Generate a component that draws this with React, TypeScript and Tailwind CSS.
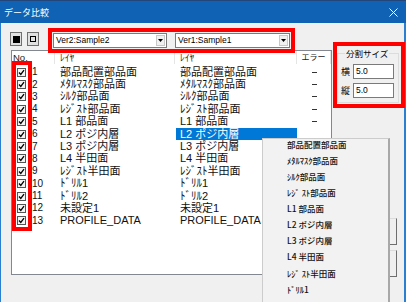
import React from "react";

const rows = [
  "部品配置部品面",
  "ﾒﾀﾙﾏｽｸ部品面",
  "ｼﾙｸ部品面",
  "ﾚｼﾞｽﾄ部品面",
  "L1 部品面",
  "L2 ポジ内層",
  "L3 ポジ内層",
  "L4 半田面",
  "ﾚｼﾞｽﾄ半田面",
  "ﾄﾞﾘﾙ1",
  "ﾄﾞﾘﾙ2",
  "未設定1",
  "PROFILE_DATA",
];

const menu = [
  "部品配置部品面",
  "ﾒﾀﾙﾏｽｸ部品面",
  "ｼﾙｸ部品面",
  "ﾚｼﾞ ｽﾄ部品面",
  "L1 部品面",
  "L2 ポジ内層",
  "L3 ポジ内層",
  "L4 半田面",
  "ﾚｼﾞ ｽﾄ半田面",
  "ﾄﾞﾘﾙ1",
  "ﾄﾞﾘﾙ2",
  "未設定1",
];

function Check() {
  return (
    <span className="w-[9px] h-[9px] border border-[#555] bg-[#f4f4f4] flex items-center justify-center shrink-0">
      <svg width="7" height="7" viewBox="0 0 7 7">
        <polyline points="1,3.5 2.8,5.5 6,1.2" fill="none" stroke="#000" strokeWidth="1.3" />
      </svg>
    </span>
  );
}

function Combo({ text }: { text: string }) {
  return (
    <div className="h-[15px] bg-white border border-[#7a7a7a] flex items-center justify-between pl-[2px] pr-[1px] w-full">
      <span className="text-[8.5px] leading-none text-black">{text}</span>
      <span className="w-[9px] h-[11px] bg-[#f0f0f0] border border-[#c8c8c8] flex items-center justify-center">
        <svg width="5" height="3" viewBox="0 0 5 3">
          <polygon points="0,0 5,0 2.5,3" fill="#000" />
        </svg>
      </span>
    </div>
  );
}

export default function App() {
  return (
    <div className="w-[406px] h-[302px] relative overflow-hidden bg-[#f0f0f0] font-['Liberation_Sans','Noto_Sans_CJK_JP',sans-serif] text-black">
      {/* title bar */}
      <div className="h-[23px] bg-[#1063b4] border-t border-[#23467a] flex items-center justify-between pl-[4px] pr-[8px]">
        <span className="text-white text-[9px] leading-none font-['Noto_Sans_CJK_JP',sans-serif]">データ比較</span>
        <svg width="9" height="9" viewBox="0 0 9 9">
          <line x1="0.5" y1="0.5" x2="8.5" y2="8.5" stroke="#fff" strokeWidth="1" />
          <line x1="8.5" y1="0.5" x2="0.5" y2="8.5" stroke="#fff" strokeWidth="1" />
        </svg>
      </div>

      <div className="h-[279px] border-l border-r-2 border-[#2a7fd0] flex flex-col">
        {/* toolbar */}
        <div className="h-[27px] flex items-start pl-[9px] pt-[9px]">
          <button className="w-[12px] h-[14px] bg-[#e1e1e1] border border-[#707070] flex items-center justify-center">
            <span className="w-[7px] h-[7px] bg-black" />
          </button>
          <button className="ml-[5px] w-[12px] h-[14px] bg-[#e1e1e1] border border-[#707070] flex items-center justify-center">
            <span className="w-[6px] h-[6px] border border-black" />
          </button>
          <div className="ml-[14px] w-[114px] mt-[1px]">
            <Combo text="Ver2:Sample2" />
          </div>
          <div className="ml-[8px] w-[115px] mt-[1px]">
            <Combo text="Ver1:Sample1" />
          </div>
        </div>

        {/* main */}
        <div className="flex items-start pl-[10px]">
          <div className="w-[321px] h-[225px] border border-[#828790] bg-white">
            <div className="h-[13px] flex text-[9.5px] leading-none text-[#222]">
              <div className="w-[43px] border-r border-[#e5e5e5] flex items-center pl-[1px]">No.</div>
              <div className="w-[120px] border-r border-[#e5e5e5] flex items-center pl-[5px]">ﾚｲﾔ</div>
              <div className="w-[122px] border-r border-[#e5e5e5] flex items-center pl-[5px]">ﾚｲﾔ</div>
              <div className="w-[34px] border-r border-[#e5e5e5] flex items-center justify-center text-[8px]">エラー</div>
            </div>
            <div className="pt-[2px] flex flex-col">
              {rows.map((r, i) => (
                <div key={i} className="h-[12.4px] flex items-center text-[11px] leading-none text-[#111]">
                  <div className="w-[43px] flex items-center pl-[5px]">
                    <Check />
                    <span className="ml-[6px] text-[10px]">{i + 1}</span>
                  </div>
                  <div className="w-[120px] pl-[5px] whitespace-nowrap">{r}</div>
                  <div className="w-[122px] h-full flex items-center">
                    <div
                      className={
                        i === 5
                          ? "ml-[1px] w-[121px] h-full bg-[#0078d7] text-white pl-[4px] flex items-center whitespace-nowrap"
                          : "ml-[1px] w-[121px] h-full pl-[4px] flex items-center whitespace-nowrap"
                      }
                    >
                      {r}
                    </div>
                  </div>
                  <div className="w-[34px] flex items-center justify-center">
                    {i < 5 ? <span className="w-[5px] h-[1px] bg-[#333]" /> : null}
                  </div>
                </div>
              ))}
            </div>
          </div>

          {/* right column */}
          <div className="ml-[5px] mt-[-2px] flex flex-col">
            <fieldset className="w-[62px] h-[55px] border border-[#dcdcdc] px-[3px] pb-[2px]">
              <legend className="ml-[4px] px-[1px] text-[8.5px] leading-[10px] whitespace-nowrap font-['Noto_Sans_CJK_JP',sans-serif]">分割サイズ</legend>
              <div className="flex flex-col gap-[4px] mt-[6px]">
                <div className="flex items-center gap-[2px]">
                  <span className="text-[9px] leading-none w-[10px] font-['Noto_Sans_CJK_JP',sans-serif]">横</span>
                  <div className="w-[41px] h-[15px] bg-white border border-[#7a7a7a] pl-[2px] flex items-center text-[8.5px]">5.0</div>
                </div>
                <div className="flex items-center gap-[2px]">
                  <span className="text-[9px] leading-none w-[10px] font-['Noto_Sans_CJK_JP',sans-serif]">縦</span>
                  <div className="w-[41px] h-[15px] bg-white border border-[#7a7a7a] pl-[2px] flex items-center text-[8.5px]">5.0</div>
                </div>
              </div>
            </fieldset>
            <button className="ml-[3px] mt-[115px] w-[57px] h-[27px] bg-[#f0f0f0] border border-[#dcdcdc] border-r-[#6e6e6e] border-b-[#6e6e6e]" />
            <button className="ml-[3px] mt-[5px] w-[57px] h-[27px] bg-[#f0f0f0] border border-[#dcdcdc] border-r-[#6e6e6e] border-b-[#6e6e6e]" />
          </div>
        </div>
      </div>

      {/* context menu */}
      <div className="absolute left-[262px] top-[138px] w-[128px] h-[200px] bg-[#f2f2f2] border-l border-[#cccccc] border-r-2 border-r-[#a8a8a8] border-t border-t-[#cccccc]">
        <div className="mt-[-3px] flex flex-col">
          {menu.map((m, i) => (
            <div key={i} className="h-[16.1px] flex items-center pl-[24px] text-[8.5px] font-medium leading-none text-[#111] font-['Noto_Sans_CJK_JP',sans-serif] whitespace-nowrap">
              {m}
            </div>
          ))}
        </div>
      </div>

      {/* annotation boxes */}
      <div className="absolute left-[48px] top-[28px] w-[247px] h-[25px] border-4 border-[#ff0000]" />
      <div className="absolute left-[333px] top-[42px] w-[72px] h-[66px] border-4 border-[#ff0000]" />
      <div className="absolute left-[12px] top-[61px] w-[20px] h-[170px] border-4 border-[#ff0000]" />
    </div>
  );
}
